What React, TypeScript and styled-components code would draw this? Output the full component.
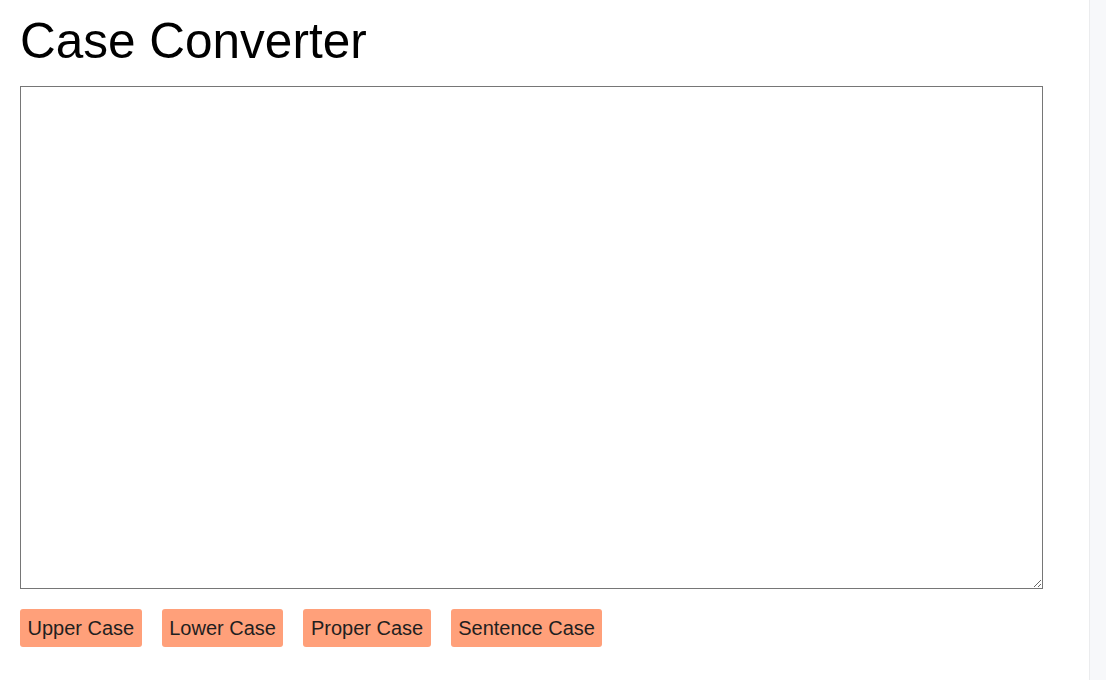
import React, { useState } from "react";
import styled, { createGlobalStyle } from "styled-components";

const GlobalStyle = createGlobalStyle`
  html, body { margin: 0; padding: 0; background: #ffffff; }
  body { font-family: "Liberation Sans", Arial, sans-serif; color: #000; }
  * { box-sizing: border-box; }
`;

const Page = styled.div`
  display: flex;
  width: 1106px;
  height: 680px;
  overflow: hidden;
`;

const Main = styled.main`
  flex: 1;
  display: flex;
  flex-direction: column;
  align-items: flex-start;
  padding: 12px 20px 0 20px;
`;

const Title = styled.h1`
  margin: 0 0 17px 0;
  font-size: 49.5px;
  font-weight: 400;
  line-height: 57px;
  color: #000;
`;

const Editor = styled.textarea`
  width: 1023px;
  height: 503px;
  margin: 0;
  border: 1px solid #767676;
  border-radius: 0;
  padding: 2px;
  font-family: "Liberation Mono", monospace;
  font-size: 13px;
  background: #fff;
  outline: none;
`;

const Toolbar = styled.div`
  display: flex;
  gap: 20px;
  margin-top: 20px;
`;

const ActionButton = styled.button`
  height: 38px;
  padding: 0 7.5px;
  border: none;
  border-radius: 3px;
  background: #ffa07a;
  color: #1f1f1f;
  font-family: "Liberation Sans", Arial, sans-serif;
  font-size: 20px;
  line-height: 23px;
  cursor: pointer;
`;

const SideRail = styled.aside`
  width: 17px;
  flex: none;
  background: #f7f8fa;
  border-left: 1px solid #ebecee;
`;

const toProper = (s: string) =>
  s.toLowerCase().replace(/\b\w/g, (c) => c.toUpperCase());
const toSentence = (s: string) =>
  s.toLowerCase().replace(/(^\s*\w|[.!?]\s+\w)/g, (c) => c.toUpperCase());

export default function App() {
  const [text, setText] = useState("");
  const actions: { label: string; fn: (s: string) => string }[] = [
    { label: "Upper Case", fn: (s) => s.toUpperCase() },
    { label: "Lower Case", fn: (s) => s.toLowerCase() },
    { label: "Proper Case", fn: toProper },
    { label: "Sentence Case", fn: toSentence },
  ];
  return (
    <>
      <GlobalStyle />
      <Page>
        <Main>
          <Title>Case Converter</Title>
          <Editor value={text} onChange={(e) => setText(e.target.value)} />
          <Toolbar>
            {actions.map((a) => (
              <ActionButton key={a.label} onClick={() => setText(a.fn(text))}>
                {a.label}
              </ActionButton>
            ))}
          </Toolbar>
        </Main>
        <SideRail />
      </Page>
    </>
  );
}
